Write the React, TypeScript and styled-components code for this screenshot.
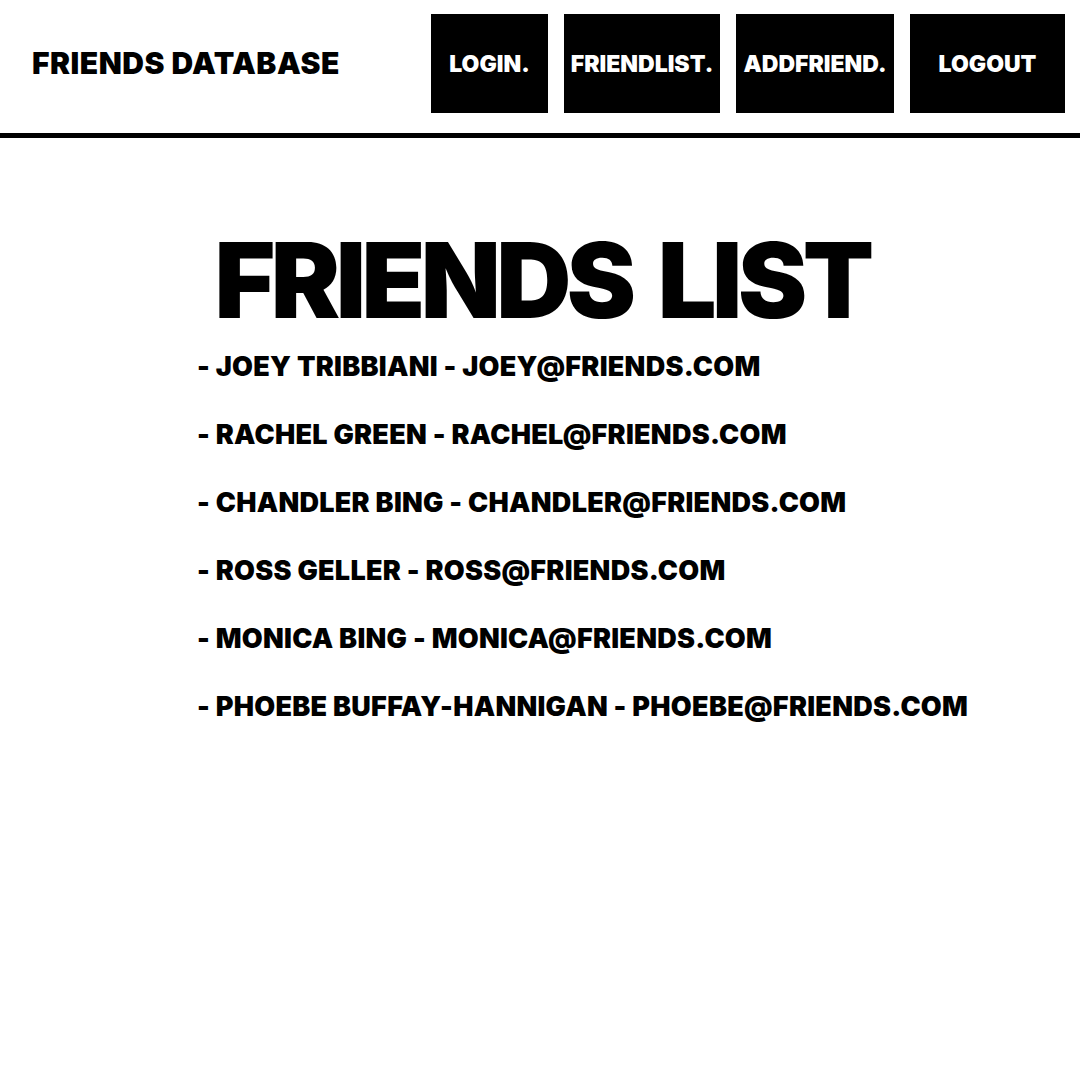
import styled, { createGlobalStyle } from "styled-components";

const GlobalStyle = createGlobalStyle`
  html, body {
    margin: 0;
    padding: 0;
    background: #ffffff;
  }
  body {
    font-family: "Inter", "Open Sans", sans-serif;
    color: #000;
  }
`;

const Page = styled.div`
  width: 1080px;
  height: 1080px;
  background: #fff;
`;

const Header = styled.header`
  height: 138px;
  box-sizing: border-box;
  display: flex;
  align-items: flex-start;
  justify-content: space-between;
  border-bottom: 5px solid #000;
`;

const Brand = styled.h1`
  margin: 44px 0 0 32px;
  font-size: 30px;
  font-weight: 900;
  line-height: 38px;
  letter-spacing: 0.5px;
`;

const Nav = styled.nav`
  display: flex;
  gap: 16px;
  margin: 14px 15px 0 0;
`;

const NavButton = styled.a<{ $w: number }>`
  width: ${(p) => p.$w}px;
  height: 99px;
  background: #000;
  color: #fff;
  display: flex;
  align-items: center;
  justify-content: center;
  font-size: 23px;
  font-weight: 900;
  text-decoration: none;
  cursor: pointer;
`;

const Main = styled.main`
  display: flex;
  flex-direction: column;
  align-items: center;
`;

const Title = styled.h2`
  margin: 82px 0 0;
  padding-left: 4px;
  font-size: 104px;
  font-weight: 900;
  line-height: 120px;
  letter-spacing: -4.5px;
  word-spacing: 10px;
`;

const List = styled.ul`
  list-style: none;
  margin: 10px 0 0;
  padding: 0 0 0 197px;
  align-self: stretch;
  display: flex;
  flex-direction: column;
  gap: 34px;
`;

const Item = styled.li`
  font-size: 27px;
  font-weight: 900;
  line-height: 34px;
  letter-spacing: 0.27px;
`;

const links = [
  { label: "LOGIN.", w: 117 },
  { label: "FRIENDLIST.", w: 156 },
  { label: "ADDFRIEND.", w: 158 },
  { label: "LOGOUT", w: 155 },
];

const friends = [
  { name: "JOEY TRIBBIANI", email: "JOEY@FRIENDS.COM" },
  { name: "RACHEL GREEN", email: "RACHEL@FRIENDS.COM" },
  { name: "CHANDLER BING", email: "CHANDLER@FRIENDS.COM" },
  { name: "ROSS GELLER", email: "ROSS@FRIENDS.COM" },
  { name: "MONICA BING", email: "MONICA@FRIENDS.COM" },
  { name: "PHOEBE BUFFAY-HANNIGAN", email: "PHOEBE@FRIENDS.COM" },
];

export default function App() {
  return (
    <Page>
      <GlobalStyle />
      <Header>
        <Brand>FRIENDS DATABASE</Brand>
        <Nav>
          {links.map((l) => (
            <NavButton key={l.label} $w={l.w}>
              {l.label}
            </NavButton>
          ))}
        </Nav>
      </Header>
      <Main>
        <Title>FRIENDS LIST</Title>
        <List>
          {friends.map((f) => (
            <Item key={f.email}>
              - {f.name} - {f.email}
            </Item>
          ))}
        </List>
      </Main>
    </Page>
  );
}
